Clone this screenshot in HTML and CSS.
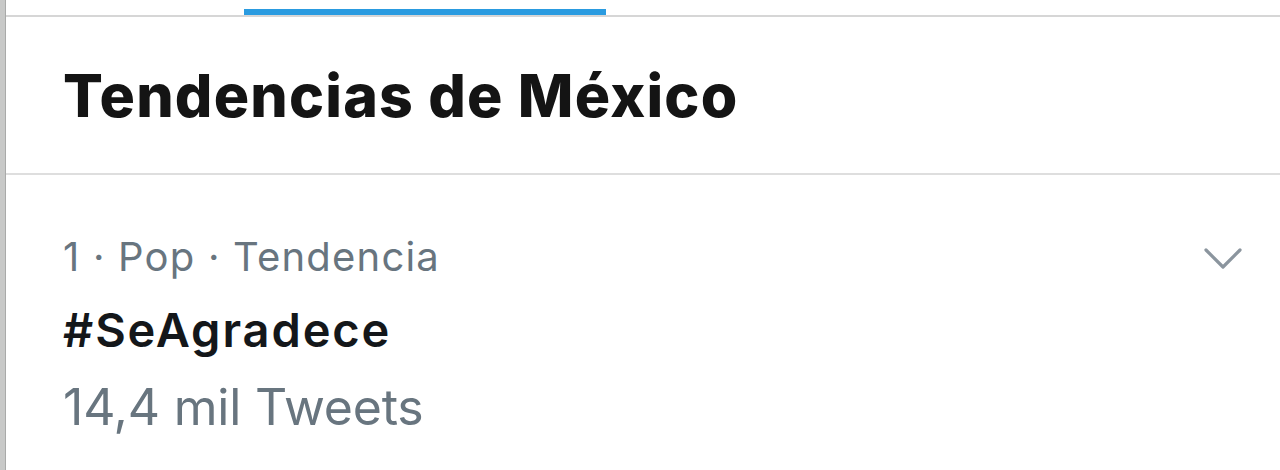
FILE: index.html
```html
<!DOCTYPE html>
<html lang="es">
<head>
<meta charset="utf-8">
<link rel="stylesheet" href="styles.css">
</head>
<body>
<div class="page">
  <div class="edge"></div>
  <main class="main">
    <div class="tabs">
      <div class="tab"></div>
      <div class="tab active"></div>
      <div class="tab"></div>
    </div>
    <header class="header">
      <h1 class="title">Tendencias de México</h1>
    </header>
    <section class="trend">
      <div class="trend-body">
        <div class="meta">1 · Pop · Tendencia</div>
        <div class="tag">#SeAgradece</div>
        <div class="count">14,4 mil Tweets</div>
      </div>
      <svg class="chev" width="40" height="24" viewBox="0 0 40 24" aria-hidden="true">
        <path d="M3 3 L20 20 L37 3" fill="none" stroke="#8b959e" stroke-width="3.2" stroke-linecap="round" stroke-linejoin="round"/>
      </svg>
    </section>
  </main>
</div>
</body>
</html>
```
FILE: styles.css
```css
html, body {
  margin: 0;
  padding: 0;
  background: #ffffff;
}
.page {
  display: flex;
  height: 470px;
  overflow: hidden;
}
.edge {
  width: 5px;
  flex: none;
  background: #c8c9c8;
  border-right: 1px solid #a9aaa9;
}
.main {
  flex: 1;
  display: flex;
  flex-direction: column;
  font-family: Inter, "Noto Sans", sans-serif;
}
.tabs {
  display: flex;
  height: 15px;
  border-bottom: 2px solid #d6d6d6;
  align-items: flex-end;
  padding-left: 238px;
}
.tab.active {
  width: 362px;
  height: 6px;
  background: #2a9be0;
}
.header {
  height: 156px;
  border-bottom: 2px solid #dedede;
  display: flex;
  align-items: center;
  padding-left: 57px;
}
.title {
  margin: 0;
  font-size: 59px;
  font-weight: 800;
  color: #141414;
  letter-spacing: 1.2px;
}
.trend {
  display: flex;
  justify-content: space-between;
  padding: 62px 37px 0 57px;
}
.meta {
  font-size: 40px;
  line-height: 40px;
  color: #68757f;
  letter-spacing: 1.2px;
}
.tag {
  font-size: 47px;
  line-height: 47px;
  font-weight: 600;
  color: #14171a;
  letter-spacing: 1.9px;
  margin-top: 29px;
}
.count {
  font-size: 50px;
  line-height: 50px;
  color: #68757f;
  letter-spacing: -0.2px;
  margin-top: 29px;
}
.chev {
  margin-top: 10px;
}
```
